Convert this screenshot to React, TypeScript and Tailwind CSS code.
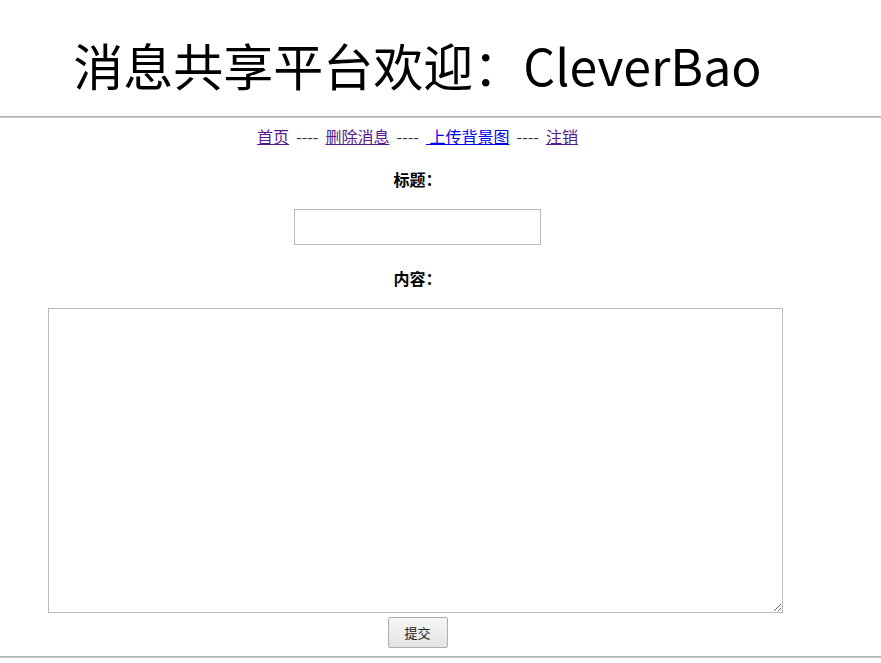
import React from "react";

export default function App() {
  const font = { fontFamily: '"Noto Sans CJK SC", "Noto Sans", sans-serif' };
  return (
    <div className="w-[881px] h-[663px] bg-white text-black overflow-hidden" style={font}>
      <div className="w-[835px] h-[116px] flex items-start justify-center pt-[29px]">
        <h1 className="text-[50px] leading-[70px] font-normal whitespace-nowrap">消息共享平台欢迎：CleverBao</h1>
      </div>
      <div className="h-[2px] bg-[#c8c8c8] border-t border-[#b4b4b4]" />
      <div className="w-[835px] flex flex-col items-center">
        <div className="mt-[7px] h-[22px] text-[16px] leading-[22px] text-[#333] whitespace-pre">
          <a href="#" className="underline text-[#551a8b]">首页</a>
          <span className="mx-[3.5px]"> ---- </span>
          <a href="#" className="underline text-[#551a8b]">删除消息</a>
          <span className="mx-[3.5px]"> ---- </span>
          <a href="#" className="underline text-[#0000ee]"> 上传背景图</a>
          <span className="mx-[3.5px]"> ---- </span>
          <a href="#" className="underline text-[#551a8b]">注销</a>
        </div>
        <div className="mt-[20px] h-[24px] text-[16px] leading-[24px] font-bold">标题：</div>
        <input type="text" className="mt-[18px] w-[247px] h-[36px] border border-[#b9b9b9] bg-white outline-none" />
        <div className="mt-[21px] h-[24px] text-[16px] leading-[24px] font-bold">内容：</div>
        <textarea className="mt-[18px] mr-[4px] w-[735px] h-[305px] border border-[#b9b9b9] bg-white outline-none resize" />
        <button className="mt-[4px] w-[60px] h-[31px] border border-[#adadad] rounded-[2px] bg-gradient-to-b from-[#f6f6f6] to-[#e3e3e3] text-[13px] text-[#222]">提交</button>
      </div>
      <div className="mt-[8px] h-[2px] bg-[#c8c8c8] border-t border-[#b4b4b4]" />
    </div>
  );
}
